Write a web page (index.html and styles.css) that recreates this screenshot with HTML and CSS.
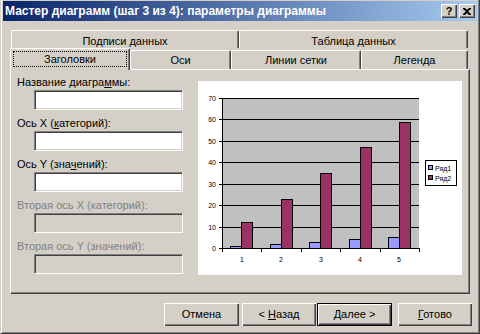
FILE: index.html
```html
<!DOCTYPE html>
<html>
<head>
<meta charset="utf-8">
<title>Мастер диаграмм</title>
<link rel="stylesheet" href="styles.css">
</head>
<body>
<div class="window">
	<div class="caption">
		<span class="caption-text">Мастер диаграмм (шаг 3 из 4): параметры диаграммы</span>
		<span class="caption-btns">
			<span class="cbtn">?</span>
			<span class="cbtn">
				<svg width="8" height="7" viewBox="0 0 8 7"><path d="M0 0h2l2 2 2-2h2v1L5 3.5 8 6v1H6L4 5 2 7H0V6l3-2.5L0 1z" fill="#000"/></svg>
			</span>
		</span>
	</div>

	<div class="tabs">
		<div class="tabrow back">
			<div class="tab t-labels">Подписи данных</div>
			<div class="tab t-table">Таблица данных</div>
		</div>
		<div class="tabrow front">
			<div class="tab sel t-titles"><div class="focus">Заголовки</div></div>
			<div class="tab t-axes">Оси</div>
			<div class="tab t-grid">Линии сетки</div>
			<div class="tab t-legend">Легенда</div>
		</div>

		<div class="panel">
			<div class="fields">
				<div class="lbl">Название диагра<u>м</u>мы:</div>
				<div class="edit"></div>
				<div class="lbl">Ось X (<u>к</u>атегорий):</div>
				<div class="edit"></div>
				<div class="lbl">Ось Y (зна<u>ч</u>ений):</div>
				<div class="edit"></div>
				<div class="lbl off">Вторая ось X (категорий):</div>
				<div class="edit off"></div>
				<div class="lbl off">Вторая ось Y (значений):</div>
				<div class="edit off"></div>
			</div>

			<div class="preview">
				<svg width="264" height="194" viewBox="0 0 264 194" class="chart">
					<rect x="24" y="17" width="197" height="150" fill="#C0C0C0"/>
					<g stroke="#000" stroke-width="1">
						<line x1="21" y1="17.5" x2="221" y2="17.5"/>
						<line x1="21" y1="38.5" x2="221" y2="38.5"/>
						<line x1="21" y1="60.5" x2="221" y2="60.5"/>
						<line x1="21" y1="81.5" x2="221" y2="81.5"/>
						<line x1="21" y1="103.5" x2="221" y2="103.5"/>
						<line x1="21" y1="124.5" x2="221" y2="124.5"/>
						<line x1="21" y1="146.5" x2="221" y2="146.5"/>
						<line x1="21" y1="167.5" x2="222" y2="167.5"/>
						<line x1="24.5" y1="17" x2="24.5" y2="171"/>
						<line x1="63.5" y1="167" x2="63.5" y2="171"/>
						<line x1="103.5" y1="167" x2="103.5" y2="171"/>
						<line x1="142.5" y1="167" x2="142.5" y2="171"/>
						<line x1="182.5" y1="167" x2="182.5" y2="171"/>
						<line x1="221.5" y1="167" x2="221.5" y2="171"/>
					</g>
					<g stroke="#000" stroke-width="1">
						<rect x="32.5" y="165.5" width="11" height="2" fill="#9999FF"/>
						<rect x="43.5" y="141.5" width="11" height="26" fill="#993366"/>
						<rect x="72.5" y="163.5" width="11" height="4" fill="#9999FF"/>
						<rect x="83.5" y="118.5" width="11" height="49" fill="#993366"/>
						<rect x="111.5" y="161.5" width="11" height="6" fill="#9999FF"/>
						<rect x="122.5" y="92.5" width="11" height="75" fill="#993366"/>
						<rect x="151.5" y="158.5" width="11" height="9" fill="#9999FF"/>
						<rect x="162.5" y="66.5" width="11" height="101" fill="#993366"/>
						<rect x="190.5" y="156.5" width="11" height="11" fill="#9999FF"/>
						<rect x="201.5" y="41.5" width="11" height="126" fill="#993366"/>
					</g>
					<g class="ax" text-anchor="end">
						<text x="18" y="20">70</text>
						<text x="18" y="41">60</text>
						<text x="18" y="63">50</text>
						<text x="18" y="84">40</text>
						<text x="18" y="106">30</text>
						<text x="18" y="127">20</text>
						<text x="18" y="149">10</text>
						<text x="18" y="170">0</text>
					</g>
					<g class="ax" text-anchor="middle">
						<text x="44" y="181">1</text>
						<text x="83" y="181">2</text>
						<text x="123" y="181">3</text>
						<text x="162" y="181">4</text>
						<text x="201" y="181">5</text>
					</g>
					<rect x="227.5" y="79.5" width="31" height="25" fill="#fff" stroke="#000"/>
					<rect x="230.5" y="84.5" width="4" height="4" fill="#9999FF" stroke="#000"/>
					<rect x="230.5" y="94.5" width="4" height="4" fill="#993366" stroke="#000"/>
					<text class="ax" x="237" y="90">Ряд1</text>
					<text class="ax" x="237" y="100">Ряд2</text>
				</svg>
			</div>
		</div>
	</div>

	<div class="buttons">
		<div class="btn">Отмена</div>
		<div class="btn b-back">&lt; <u>Н</u>азад</div>
		<div class="btn def"><u>Д</u>алее &gt;</div>
		<div class="btn b-done"><u>Г</u>отово</div>
	</div>
</div>
</body>
</html>
```

FILE: styles.css
```css
body {
	margin: 0;
	background-color: #D4D0C8;
	font-family: "Liberation Sans", Arial, sans-serif;
	font-size: 11px;
	color: #000;
}

.window {
	width: 480px;
	height: 334px;
	box-sizing: border-box;
	background-color: #D4D0C8;
	border-left: 1px solid #D4D0C8;
	border-right: 1px solid #404040;
	border-bottom: 1px solid #404040;
	box-shadow: inset 1px 0 #fff, inset -1px -1px #808080;
	padding: 1px 2px 2px 2px;
}

/* titulo */
.caption {
	height: 20px;
	display: flex;
	align-items: center;
	justify-content: space-between;
	background: linear-gradient(to right, #0A246A, #A6CAF0);
	color: #fff;
	font-weight: bold;
	font-size: 12px;
	padding-left: 2px;
	padding-right: 2px;
}

.caption-btns {
	display: flex;
	gap: 2px;
}

.cbtn {
	width: 16px;
	height: 14px;
	box-sizing: border-box;
	display: flex;
	align-items: center;
	justify-content: center;
	background-color: #D4D0C8;
	box-shadow: inset 1px 1px #fff, inset -1px -1px #404040, inset -2px -2px #808080;
	color: #000;
	font-size: 11px;
	font-weight: bold;
}

/* abas */
.tabs {
	margin: 9px 0 0 7px;
	width: 460px;
}

.tabrow {
	display: flex;
	align-items: flex-end;
}

.tabrow.back {
	height: 18px;
	padding-left: 1px;
}

.tabrow.front {
	height: 21px;
}

.tab {
	box-sizing: border-box;
	background-color: #D4D0C8;
	border-top: 1px solid #fff;
	border-left: 1px solid #fff;
	border-right: 1px solid #404040;
	box-shadow: inset -1px 0 #808080;
	border-radius: 2px 2px 0 0;
	text-align: center;
}

.back .tab {
	height: 18px;
	padding-top: 3px;
	line-height: 14px;
}

.front .tab {
	height: 19px;
	line-height: 18px;
}

.front .tab.sel {
	height: 22px;
	margin-bottom: -1px;
	position: relative;
	z-index: 1;
	line-height: 20px;
	padding: 2px 2px 3px 2px;
}

.focus {
	height: 16px;
	line-height: 15px;
	box-sizing: border-box;
	border: 1px dotted #000;
}

.t-labels { width: 228px; }
.t-table  { width: 229px; }
.t-titles { width: 120px; }
.t-axes   { width: 101px; }
.t-grid   { width: 130px; }
.t-legend { width: 107px; }

.panel {
	height: 225px;
	box-sizing: border-box;
	border-top: 1px solid #fff;
	border-left: 1px solid #fff;
	border-right: 1px solid #404040;
	border-bottom: 1px solid #404040;
	box-shadow: inset -1px -1px #808080;
	display: flex;
}

.fields {
	width: 187px;
	box-sizing: border-box;
	padding: 5px 0 0 6px;
}

.lbl {
	height: 14px;
	line-height: 14px;
	margin-bottom: 1px;
	white-space: nowrap;
}

.lbl.off { color: #808080; }

.edit {
	width: 149px;
	height: 20px;
	margin: 0 0 6px 17px;
	box-sizing: border-box;
	background-color: #fff;
	border: 1px solid;
	border-color: #808080 #fff #fff #808080;
	box-shadow: inset 1px 1px #404040, inset -1px -1px #D4D0C8;
}

.edit.off { background-color: #D4D0C8; }

.preview {
	margin-top: 11px;
	width: 264px;
	height: 194px;
	background-color: #fff;
}

.chart { display: block; }

.ax {
	font-family: "Liberation Sans", Arial, sans-serif;
	font-size: 7px;
	fill: #000;
}

/* botoes */
.buttons {
	display: flex;
	justify-content: flex-end;
	margin-top: 9px;
	padding-right: 5px;
}

.btn {
	width: 75px;
	height: 23px;
	box-sizing: border-box;
	line-height: 23px;
	text-align: center;
	background-color: #D4D0C8;
	box-shadow: inset 1px 1px #fff, inset -1px -1px #404040, inset -2px -2px #808080;
	margin-left: 3px;
}

.b-back { width: 74px; }

.btn.def {
	margin-left: 1px;
	border: 1px solid #000;
	line-height: 21px;
}

.b-done {
	width: 74px;
	margin-left: 6px;
}
```
